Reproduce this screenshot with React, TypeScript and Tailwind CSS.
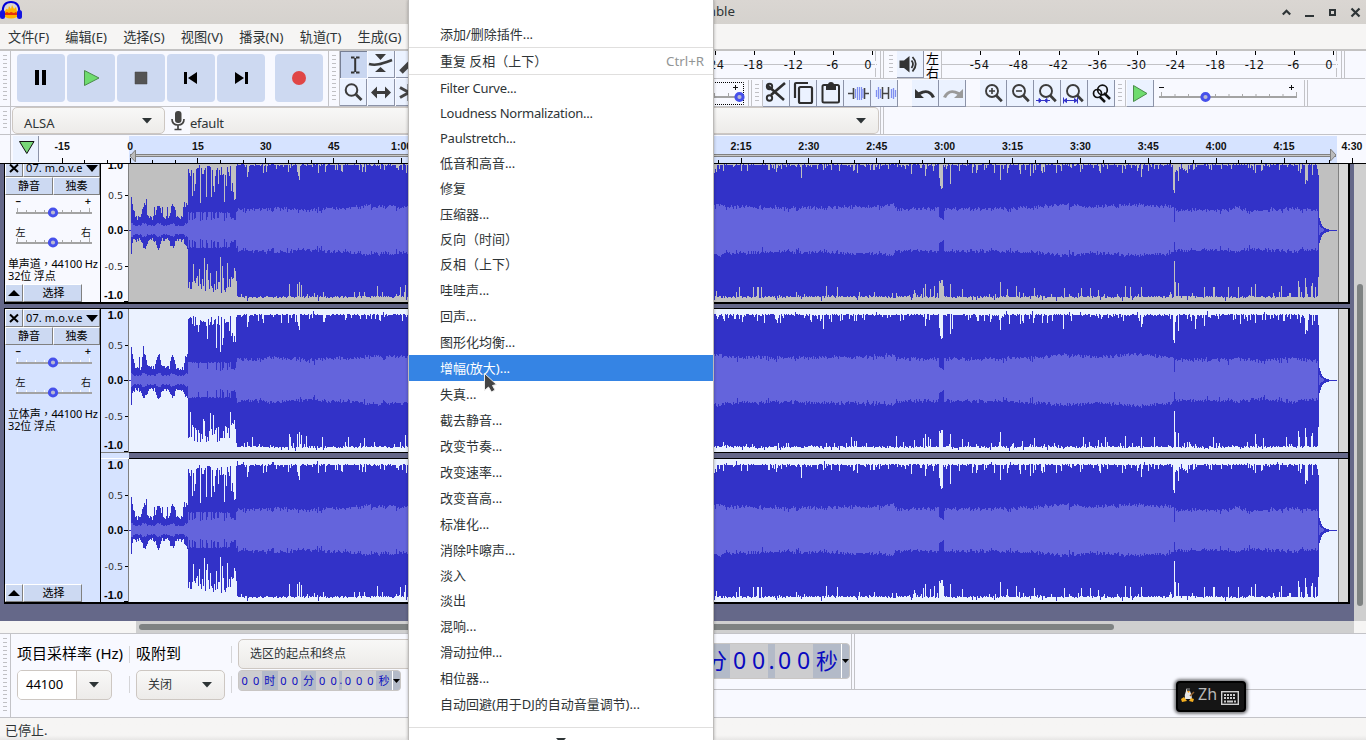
import React from 'react';

const UI = "font-['Noto_Sans','Noto_Sans_CJK_SC',sans-serif]";

/* ---------- waveform ---------- */

function rng(seed: number) {
  let s = seed;
  return () => {
    s = (s * 1664525 + 1013904223) >>> 0;
    return s / 4294967296;
  };
}

const RMS: [number, number][] = [
  [237, 20], [250, 19], [275, 21], [300, 19], [355, 21], [365, 23], [400, 22], [500, 23], [600, 22], [708, 22],
  [717, 25], [725, 22], [780, 21], [850, 22], [885, 23], [892, 25], [896, 20], [938, 20], [944, 20], [1000, 20],
  [1030, 21], [1060, 24], [1100, 22], [1120, 23], [1140, 25], [1148, 23], [1170, 23], [1176, 19], [1230, 19],
  [1236, 22], [1242, 19], [1260, 18], [1294, 21], [1300, 19], [1318, 19],
];

const TOP_DIPS: Record<number, number> = {
  247: 53, 248: 58, 263: 57, 298: 54, 299: 50, 297: 58, 925: 54, 939: 52, 940: 44, 941: 41, 942: 42, 950: 46, 1000: 50,
  1020: 56, 1033: 57, 1042: 57, 1141: 53, 1173: 40, 1174: 37, 1175: 58, 1178: 49, 1255: 57, 1300: 57, 1305: 46,
  1306: 50, 1307: 49, 1312: 55,
};
const BOT_DIPS: Record<number, number> = {
  289: 54, 297: 54, 299: 52, 301: 55, 405: 55, 914: 60, 923: 58, 925: 54, 930: 59, 939: 51, 940: 53, 941: 50, 942: 50,
  950: 54, 962: 59, 1000: 52, 1034: 58, 1098: 60, 1125: 56, 1141: 57, 1174: 31, 1175: 52, 1178: 53, 1213: 57, 1255: 54,
  1298: 51, 1299: 57, 1305: 48, 1306: 57, 1312: 53, 1311: 56,
};

function rmsAt(x: number) {
  for (let i = 1; i < RMS.length; i++) {
    if (x <= RMS[i][0]) {
      const [x0, a] = RMS[i - 1];
      const [x1, b] = RMS[i];
      return a + ((b - a) * (x - x0)) / (x1 - x0);
    }
  }
  return 19;
}

function buildWave(seed: number) {
  const r = rng(seed);
  let peak = '';
  let rms = '';
  const bar = (x: number, t: number, b: number) => `M${x} ${71 - Math.round(t)}h1V${71 + Math.round(b)}h-1z`;
  for (let x = 131; x < 1337; x++) {
    const a = r(), c = r(), d = r(), e = r();
    let t = 0, b = 0, q = 0, q2 = 0;
    if (x < 188) {
      const hump = Math.max(0, Math.cos(((x - 144) / 14.2) * Math.PI * 2)) * 13;
      t = 10 + hump + a * 5 + (a > 0.93 ? 8 : 0) + (x === 131 ? 10 : x < 135 ? 5 : 0);
      b = 8 + hump * 0.6 + c * 4 + (x === 131 ? 8 : 0);
      q = 4 + (hump > 6 ? 2 : 0) + d;
      q2 = q;
    } else if (x < 237) {
      const valley = x > 230 && x < 236;
      t = a < 0.3 ? 26 + c * 25 : 54 + c * 11;
      b = e < 0.35 ? 26 + d * 28 : 48 + d * 15;
      if (x === 188) { t = 61; b = 58; }
      if (valley) { t = 28 + c * 20; b = 38 + d * 12; }
      q = valley ? 10 + d * 2 : a < 0.4 ? 9 + c * 4 : 17 + c;
      q2 = q;
    } else if (x < 1318) {
      t = 66 - a * 1.6 - (c < 0.22 ? d * 7 : 0) - (e < 0.02 ? 8 : 0) + (e > 0.98 ? 3 : 0);
      b = 66 + c * 1.8 - (a < 0.12 ? d * 5 : 0) - (d < 0.025 ? 10 : 0) + (e < 0.03 ? 3 : 0);
      if (TOP_DIPS[x]) t = TOP_DIPS[x];
      if (BOT_DIPS[x]) b = BOT_DIPS[x];
      q = rmsAt(x) + (d + c) * 2.6 - 1.5 - (e > 0.95 ? 3 : 0);
      q2 = rmsAt(x) + (a + d) * 2.6 - 1.5 - (e > 0.95 ? 3 : 0);
      if (x >= 939 && x <= 943) { q = 13 - (x - 939) * 0.7; q2 = q; }
      if (x === 1174) { q = 8; q2 = 12; }
    } else {
      t = 12 * Math.exp(-(x - 1319) / 3);
      b = t + 1;
      if (x === 1318) { t = 55; b = 47; }
      if (t < 0.5) { t = 0; b = 1; }
      q = x < 1324 && x > 1318 ? t * 0.4 : 0;
      q2 = q;
    }
    peak += bar(x - 129, t, b);
    if (q > 0) rms += bar(x - 129, Math.min(q, t), Math.min(q2, b));
  }
  return { peak, rms };
}

function Wave({ seed, clip = 0 }: { seed: number; clip?: number }) {
  const w = React.useMemo(() => buildWave(seed), [seed]);
  return (
    <svg width="1209" height={143 - clip} viewBox={`0 ${clip} 1209 ${143 - clip}`} shapeRendering="crispEdges" className="block shrink-0">
      <path d="M0 71h3v1h-3z" fill="#3232c8" />
      <path d={w.peak} fill="#3232c8" />
      <path d={w.rms} fill="#6464dc" />
    </svg>
  );
}

/* ---------- small parts ---------- */

function Grip({ className = '' }: { className?: string }) {
  return (
    <div className={`flex shrink-0 justify-center border-r border-[#c3c3c7] py-[4px] ${className}`}>
      <div className="w-[4px] bg-[repeating-linear-gradient(to_bottom,#c0c0c4_0_1px,transparent_1px_4px)]" />
    </div>
  );
}

function Ends({ className = '' }: { className?: string }) {
  return <div className={`w-[4px] shrink-0 border-x border-[#c3c3c7] ${className}`} />;
}

function Transport({ children }: { children: React.ReactNode }) {
  return (
    <div className="flex h-[48px] w-[48px] items-center justify-center rounded-[4px] bg-[#cdd9f1]">
      <svg width="48" height="48" viewBox="0 0 48 48">{children}</svg>
    </div>
  );
}

function Tool({ children, on = false }: { children?: React.ReactNode; on?: boolean }) {
  return (
    <div
      className={`h-[27px] w-[27px] shrink-0 border-[#8c93a8] ${
        on ? 'border-l border-t border-l-[#777f94] border-t-[#777f94] bg-[#c9d6f0]' : 'border-b border-r bg-[#ebf2ff]'
      }`}
    >
      <svg width="26" height="26" viewBox="0 0 26 26" className="block" fill="none">{children}</svg>
    </div>
  );
}

function Lens({ sign, extra }: { sign?: React.ReactNode; extra?: React.ReactNode }) {
  return (
    <>
      <circle cx="12" cy="11" r="6" stroke="#3c3c3c" strokeWidth="1.900" />
      <path d="M16 15.200l5.800 6" stroke="#3c3c3c" strokeWidth="2.700" />
      {sign}
      {extra}
    </>
  );
}

function Meter({ first, label, count, width }: { first: number; label: number; count: number; width: number }) {
  return (
    <svg width={width} height="27" viewBox={`0 0 ${width} 27`} className="block shrink-0">
      <path d={`M0 13.500H${width - 2}`} stroke="#c3c3c7" />
      <path d={`M${width - 1.5} 0v10M${width - 1.5} 17v9M${width - 1} 13.500h4`} stroke="#c3c3c7" />
      {Array.from({ length: count }, (_, i) => {
        const x = Math.round(first + i * 39.25);
        const v = label + i * 6;
        return (
          <g key={i}>
            <path d={`M${x + 0.5} 0v4`} stroke="#000" />
            <text x={v === 0 ? x - 4 : x - 0.5} y="17.500" textAnchor="middle" fontSize="11.500" letterSpacing="0.300" fill="#111" className="font-['DejaVu_Sans',sans-serif]">
              {v}
            </text>
          </g>
        );
      })}
    </svg>
  );
}

function Slider({ left, right, dark }: { left: string; right: string; dark: boolean }) {
  const signs = left === '–';
  return (
    <svg width="95" height="30" viewBox="0 0 95 30" className="block overflow-visible">
      <text x="10.500" y={signs ? 9 : 10} fontSize={signs ? 11 : 10} fontWeight={signs ? 600 : 400} fill="#111" className={UI}>{left}</text>
      <text x="86" y={signs ? 9 : 10} fontSize={signs ? 11 : 10} fontWeight={signs ? 600 : 400} fill="#111" textAnchor="end" className={UI}>{right}</text>
      <path d={Array.from({ length: 9 }, (_, i) => `M${12.5 + i * 9} ${i % 8 ? 14 : 12}v4`).join('')} stroke={dark ? '#fff' : '#a9a9a9'} />
      <path d="M11 17h76" stroke="#a3a3a3" strokeWidth="2" />
      <circle cx="48" cy="16.500" r="3.600" fill="#b9b9d2" stroke="#4650eb" strokeWidth="3" />
    </svg>
  );
}

function Bevel({ children, className = 'justify-center' }: { children: React.ReactNode; className?: string }) {
  return (
    <div className={`flex items-center whitespace-nowrap border-b border-r border-[#808080] border-l border-t border-l-white border-t-white bg-[#ccd9f2] ${className}`}>
      {children}
    </div>
  );
}

function Scale({ clip = 0, bg }: { clip?: number; bg: string }) {
  const rows: [string, number, boolean][] = [
    ['1.0', 6, true], ['0.5', 36, false], ['0.0', 71, true], ['-0.5', 107, false], ['-1.0', 136, true],
  ];
  return (
    <div className={`w-[28px] shrink-0 border-r border-[#808080] ${bg}`}>
      <svg width="27" height={143 - clip} viewBox={`0 ${clip} 27 ${143 - clip}`} className="block">
        {rows.map(([t, y, bold]) => (
          <text key={t} x="22" y={y + 3.6} textAnchor="end" fontSize={bold ? 11 : 9.5} fontWeight={bold ? 700 : 400} fill={bold ? '#000' : '#333'}
            className={bold ? "font-['Liberation_Sans',sans-serif]" : "font-['DejaVu_Sans',sans-serif]"}>{t}</text>
        ))}
        <path d="M23 71.500h4M24 36.500h3M24 107.500h3M23 142.500h4" stroke="#000" />
      </svg>
    </div>
  );
}

function Info({ kind }: { kind: string }) {
  return (
    <div className="pl-[3px] text-[11px] leading-[12px] tracking-[-0.150px] whitespace-nowrap text-black">
      <div>{kind}<span className="font-['Noto_Sans_CJK_TC',sans-serif]">，</span>44100 Hz</div>
      <div>32位 浮点</div>
    </div>
  );
}

function Header({ clipped = false }: { clipped?: boolean }) {
  return (
    <>
      <div className={`flex h-[18px] ${clipped ? '-mt-[5px]' : ''}`}>
        <Bevel className="w-[18px] justify-center">
          <svg width="10" height="10" viewBox="0 0 10 10"><path d="M1 1.500l8 7.500M9 1.500l-8 7.500" stroke="#000" strokeWidth="2" /></svg>
        </Bevel>
        <Bevel className="w-[77px] justify-between pl-[2px] pr-[1px] text-[11px] leading-[14px] text-black">
          <span className="tracking-[0.100px]">07. m.o.v.e</span>
          <svg width="12" height="7" viewBox="0 0 12 7"><path d="M0 0h12L6 7z" fill="#000" /></svg>
        </Bevel>
      </div>
      <div className="flex h-[18px] text-[11px] text-black">
        <Bevel className="w-[48px] justify-center">静音</Bevel>
        <Bevel className="w-[47px] justify-center">独奏</Bevel>
      </div>
    </>
  );
}

function Footer() {
  return (
    <div className="mt-auto flex h-[18px] text-[11px] text-black">
      <Bevel className="w-[18px] justify-center">
        <svg width="12" height="6" viewBox="0 0 12 6"><path d="M0 6h12L6 0z" fill="#000" /></svg>
      </Bevel>
      <Bevel className="w-[59px] justify-center pl-[2px]">选择</Bevel>
    </div>
  );
}

const Caret = () => (
  <svg width="10" height="6" viewBox="0 0 10 6"><path d="M0 0h10L5 5.500z" fill="#2e3436" /></svg>
);

const combo = 'flex items-center rounded-[5px] border border-[#cdc7c2] bg-linear-to-b from-[#f8f8f7] to-[#edebe9] text-[#2e3436]';

/* Each group of digits sits in its own field; units and the point lie between them. */
function Digits({ groups, big }: { groups: string[]; big: boolean }) {
  return (
    <div className={`flex items-stretch rounded-[4px] border border-[#c9c6c4] bg-[#b3bac8] text-[#0a0ac0] ${big ? 'h-[36px] text-[23px] leading-[33px]' : 'h-[21px] w-[163px] shrink-0 text-[11px] leading-[19px]'}`}>
      {groups.map((g, i) =>
        /\d/.test(g) ? (
          <span key={i} className={`flex bg-[#cdcdcf] ${big ? 'w-[38px]' : g.length === 3 ? 'w-[34px]' : 'w-[23px]'}`}>
            {g.split('').map((ch, k) => (
              <span key={k} className="flex-1 text-center">{ch}</span>
            ))}
          </span>
        ) : (
          <span
            key={i}
            className={`text-center ${g === '.' ? (big ? 'w-[7px]' : 'w-[3px] text-[10px]') : big ? 'w-[28px] text-[22px]' : 'w-[16px]'}`}
          >
            {g}
          </span>
        ),
      )}
      <span className="flex w-[8px] items-center justify-center border-l border-white">
        <svg width="7" height="4" viewBox="0 0 7 4"><path d="M0 0h7L3.500 4z" fill="#000" /></svg>
      </span>
    </div>
  );
}

/* ---------- menu ---------- */

const ITEMS = [
  'Filter Curve...', 'Loudness Normalization...', 'Paulstretch...', '低音和高音...', '修复', '压缩器...', '反向（时间）', '反相（上下）',
  '哇哇声...', '回声...', '图形化均衡...', '增幅(放大)...', '失真...', '截去静音...', '改变节奏...', '改变速率...', '改变音高...', '标准化...',
  '消除咔嚓声...', '淡入', '淡出', '混响...', '滑动拉伸...', '相位器...', '自动回避(用于DJ的自动音量调节)...',
];

function EffectMenu() {
  return (
    <div className="absolute left-[408px] top-0 h-[740px] w-[306px] overflow-hidden border-x border-[#bdbbb9] bg-white text-[13px] tracking-[-0.020px] text-[#2e3436] shadow-[0_0_3px_rgba(0,0,0,0.3)]">
      <div className="flex h-[47px] items-center pl-[31px] pt-[23px]">添加/删除插件...</div>
      <div className="flex h-[28px] items-center justify-between border-y border-[#e0dfde] pl-[31px] pr-[9px] pt-[2px]">
        <span>重复 反相（上下）</span>
        <span className="text-[13.300px] text-[#929595]">Ctrl+R</span>
      </div>
      <div className="pt-px">
        {ITEMS.map((t, i) => {
          const latin = i < 3;
          const tall = i > 4 && t.endsWith('...');
          return (
            <div key={t} className={`flex items-center whitespace-nowrap pl-[31px] ${latin ? 'h-[25px] text-[13px] tracking-[-0.250px]' : tall ? 'h-[26px] pt-[2px]' : 'h-[25px] pt-px'} ${i === 11 ? 'bg-[#3584e4] text-white' : ''}`}>
              {t}
            </div>
          );
        })}
      </div>
      <div className="mt-[10px] flex justify-center border-t border-[#e0dfde] pt-[10px]">
        <Caret />
      </div>
    </div>
  );
}

const LABELS = ['-15', '0', '15', '30', '45', '1:00', '1:15', '1:30', '1:45', '2:00', '2:15', '2:30', '2:45', '3:00', '3:15', '3:30', '3:45', '4:00', '4:15', '4:30'];

function TimeRuler() {
  let ticks = '';
  for (let i = -3; i <= 54; i++) {
    const x = Math.floor(130 + i * 22.63) + 0.5;
    if (x > 39) ticks += i % 3 === 0 ? `M${x} 23v5` : `M${x} 25v3`;
  }
  return (
    <div className="flex h-[29px] shrink-0 border-b border-black bg-[#f8f9ff]">
      <div className="w-[11px] border-r border-[#c3c3c7]" />
      <div className="my-px ml-[2px] w-[26px] border-r border-[#8c93a8] bg-[#ebf2ff]">
        <svg width="25" height="26" viewBox="0 0 25 26"><path d="M6.500 5.500h14.500L13.800 17.500z" fill="#78d778" stroke="#111" /></svg>
      </div>
      <svg width="1327" height="28" viewBox="39 0 1327 28" className="block">
        <rect x="129" y="1" width="1208" height="27" fill="#d6e3ff" />
        <rect x="130" y="19" width="1206" height="3" fill="#808080" />
        <rect x="130" y="20" width="1206" height="1" fill="#c6c6c6" />
        <path d="M135.500 15v12l-5.500-6z" fill="#bbb" stroke="#808080" />
        <path d="M1330.500 14v12l5.500-6z" fill="#bbb" stroke="#808080" />
        <path d={ticks} stroke="#000" />
        {LABELS.map((l, i) => (
          <text key={l} x={62.2 + i * 67.88} y="15" textAnchor="middle" fontSize="10.500" fontWeight="700" fill="#111" className="font-['Liberation_Sans',sans-serif]">{l}</text>
        ))}
      </svg>
    </div>
  );
}

export default function App() {
  return (
    <div className={`relative flex h-[740px] w-[1366px] flex-col overflow-hidden bg-[#f6f5f4] text-[13px] text-[#2e3436] ${UI}`}>
      {/* title bar */}
      <div className="flex h-[24px] shrink-0 items-center bg-linear-to-b from-[#dad6d2] to-[#d5d2ce]">
        <svg width="23" height="20" viewBox="0 0 23 20" className="-mt-[3px]">
          <path d="M3 12C2 4 6 1 11 1s9 3 8 11" fill="none" stroke="#0000d8" strokeWidth="2" />
          <path d="M5 10q2-4 3-1l1-4 2 3 1-4 2 4 2-2 1 5v5q-6 3-12 0z" fill="#ffb400" />
          <path d="M5 12l2-1 2 1 2-1 3 1 2-1 1 1v2H5z" fill="#e8320a" />
          <rect x="0" y="9" width="5" height="9" rx="2.500" fill="#1414e0" />
          <rect x="17" y="9" width="5" height="9" rx="2.500" fill="#1414e0" />
        </svg>
        <span className="ml-[670px] w-[42px] text-right text-[13.300px]">mble</span>
        <div className="ml-auto flex items-center gap-[12px] pr-[5px]">
          <svg width="11" height="11" viewBox="0 0 11 11"><path d="M1.800 7.500L5.500 3.800l3.700 3.700" fill="none" stroke="#2e3436" strokeWidth="2.200" /></svg>
          <svg width="11" height="11" viewBox="0 0 11 11"><path d="M1 9h9" stroke="#2e3436" strokeWidth="2" /></svg>
          <svg width="11" height="11" viewBox="0 0 11 11"><rect x="3" y="3" width="5" height="5" fill="none" stroke="#2e3436" strokeWidth="2" /></svg>
          <svg width="11" height="11" viewBox="0 0 11 11"><path d="M1.500 1.500l8 8M9.500 1.500l-8 8" stroke="#2e3436" strokeWidth="2.200" /></svg>
        </div>
      </div>

      {/* menu bar */}
      <div className="flex h-[27px] shrink-0 items-center gap-[16.200px] border-b-2 border-[#c3c2c2] pl-[8px] pt-[2px] text-[13.200px] whitespace-nowrap">
        {['文件(F)', '编辑(E)', '选择(S)', '视图(V)', '播录(N)', '轨道(T)', '生成(G)'].map((m) => <span key={m}>{m}</span>)}
      </div>

      {/* toolbars */}
      <div className="flex h-[56px] shrink-0 border-b border-[#c3c3c7] bg-[#f8f9ff]">
        <Grip className="w-[11px]" />
        <div className="flex items-start gap-[2px] pl-[6px] pt-[3px]">
          <Transport><path d="M18 16h4v15h-4zM25 16h4v15h-4z" fill="#000" /></Transport>
          <Transport><path d="M17.500 16.500v15L32 24z" fill="#6edc6e" stroke="#4b8b4b" /></Transport>
          <Transport><path d="M18 18h12v12H18z" fill="#545454" stroke="#444" strokeWidth=".5" /></Transport>
          <Transport><path d="M17 18h3v12h-3zM30 18v12l-9-6z" fill="#000" /></Transport>
          <Transport><path d="M18 18v12l9-6zM28 18h3v12h-3z" fill="#000" /></Transport>
          <div className="ml-[8px]"><Transport><circle cx="24" cy="24" r="7" fill="#e04646" /></Transport></div>
        </div>
        <div className="ml-[5px] w-px bg-[#c3c3c7]" />
        <Grip className="w-[11px]" />
        <div className="grid w-[110px] shrink-0 grid-cols-[27px_27px_27px] content-start gap-x-px gap-y-px overflow-hidden">
          <Tool on><path d="M10 5.500h3.500M15 5.500h3.500M10 20.500h3.500M15 20.500h3.500M14.200 6v14" stroke="#333" strokeWidth="2" /></Tool>
          <Tool>
            <path d="M1 13c7 2 12 0 23-4" stroke="#3c3c3c" strokeWidth="2.600" /><path d="M7 3h11l-5.500 6zM7 21h11l-5.500-5z" fill="#3c3c3c" />
          </Tool>
          <Tool><path d="M5 21L20 6" stroke="#444" strokeWidth="5" /></Tool>
          <Tool><circle cx="11.500" cy="11" r="5.800" stroke="#3c3c3c" strokeWidth="2" /><path d="M16 15.500l5.500 5.500" stroke="#3c3c3c" strokeWidth="2.800" /></Tool>
          <Tool><path d="M3 13.500l6-6v4.500h8V7.500l6 6-6 6V15H9v4.500z" fill="#3c3c3c" /></Tool>
          <Tool><path d="M13 5v17M4 8.500l18 10M4 18.500l18-10" stroke="#444" strokeWidth="3" /></Tool>
        </div>

        <div className="flex w-[915px] shrink-0 flex-col">
          <div className="flex h-[28px] border-b border-[#c3c3c7]">
            <div className="w-[240px]" />
            <Meter first={25} label={-24} count={5} width={187} />
            <div className="w-[3px]" />
            <Ends />
            <Grip className="w-[13px] border-r-0" />
            <Tool>
              <path d="M2.500 9.500h4.500L12.500 5v16.500L7 17H2.500z" fill="#333" />
              <path d="M14.500 9.500q3 3.500 0 7.500M15.500 6q6.500 7 0 14.500" stroke="#333" strokeWidth="1.800" />
            </Tool>
            <div className="flex w-[17px] flex-col items-center text-[13px] leading-[14px] text-black"><span>左</span><span>右</span></div>
            <div className="w-px bg-[#c3c3c7]" />
            <Meter first={38} label={-54} count={10} width={396} />
            <div className="w-[3px]" />
            <Ends />
          </div>
          <div className="flex h-[27px] pt-px">
            <div className="flex w-[297px] justify-end">
              <svg width="86" height="26" viewBox="0 0 86 26" className="block shrink-0">
                <path d="M0 2.500h82.500v22H0" fill="none" stroke="#000" strokeDasharray="1 1" />
                <path d="M0 17h82" stroke="#a3a3a3" strokeWidth="2" /><path d="M53.500 13v3M67.500 13v3" stroke="#a3a3a3" />
                <path d="M72 7.500h5M74.500 5v5" stroke="#111" /><circle cx="78.500" cy="17" r="3.600" fill="#b9b9d2" stroke="#4650eb" strokeWidth="3" />
              </svg>
            </div>
            <div className="w-px" />
            <Ends />
            <Grip className="w-[11px]" />
            <Tool>
              <path d="M4 5l17 15M22 3L8 15" stroke="#2e2e2e" strokeWidth="2.600" />
              <circle cx="6.500" cy="6.500" r="2.700" stroke="#2e2e2e" strokeWidth="1.900" /><circle cx="6.500" cy="18" r="2.700" stroke="#2e2e2e" strokeWidth="1.900" />
            </Tool>
            <Tool><rect x="9" y="7" width="13" height="16" rx="1.500" stroke="#2e2e2e" strokeWidth="2.200" /><path d="M5 18V4q0-1 1-1h12" stroke="#2e2e2e" strokeWidth="2.200" /></Tool>
            <Tool><rect x="5.500" y="5" width="16.500" height="17.500" rx="1.500" stroke="#2e2e2e" strokeWidth="2" /><path d="M9 5h10v5H9zM11 5q0-3 3-3t3 3" fill="#2e2e2e" /></Tool>
            <Tool><path d="M4 13.500h5M20 13.500h5M9.500 8v11M20.500 8v11" stroke="#444" strokeWidth="1.600" /><path d="M11.500 9v9M13.500 7v13M15.500 7v13M17.500 7v13M19 9v9" stroke="#7f8ff0" strokeWidth="1.200" /></Tool>
            <Tool><path d="M5.500 10v7M7.500 7v12M9.500 9v9M20.500 9v9M22.500 8v11M24.500 10v7" stroke="#7f8ff0" strokeWidth="1.300" /><path d="M11.500 7v12M17.500 7v12M12 13.500h6" stroke="#444" strokeWidth="1.500" /></Tool>
            <div className="w-[14px]" />
            <Tool><path d="M3 9v9h9l-3.500-3.200q7.500-4.800 11.500 3.200l3-1Q18 6.500 6.500 12.200z" fill="#333" /></Tool>
            <Tool><path d="M24 9v9h-9l3.500-3.200q-7.500-4.800-11.500 3.200l-3-1Q9 6.500 20.500 12.200z" fill="#9a9a9a" /></Tool>
            <div className="w-[14px]" />
            <Tool><Lens sign={<path d="M9 11h6M12 8v6" stroke="#3c3c3c" strokeWidth="1.600" />} /></Tool>
            <Tool><Lens sign={<path d="M9 11h6" stroke="#3c3c3c" strokeWidth="1.600" />} /></Tool>
            <Tool><Lens extra={<path d="M2 20.500h14M5 18.500L7.500 20.500l-2.500 2zM13 18.500L10.500 20.500l2.500 2z" stroke="#3232c8" fill="#3232c8" />} /></Tool>
            <Tool><Lens extra={<path d="M2.500 17.500v6M16.500 17.500v6M3 20.500h13M5.500 18.500l-2.500 2 2.500 2zM13.500 18.500l2.500 2-2.500 2z" stroke="#3232c8" fill="#3232c8" />} /></Tool>
            <Tool>
              <circle cx="14.500" cy="10" r="4.800" stroke="#111" strokeWidth="1.700" /><circle cx="9.500" cy="13.500" r="4" stroke="#111" strokeWidth="1.700" />
              <path d="M16 13l6 6M12 17l5 5" stroke="#111" strokeWidth="2.500" />
            </Tool>
            <Grip className="w-[11px]" />
            <div className="w-px" />
            <Tool><path d="M6.500 5.500v16L20 13.500z" fill="#6edc6e" stroke="#4b8b4b" /></Tool>
            <svg width="150" height="26" viewBox="0 0 150 26" className="block shrink-0">
              <path d={Array.from({ length: 11 }, (_, i) => `M${7.5 + i * 13.5} ${i % 10 ? 14 : 12}v4`).join('')} stroke="#a9a9a9" />
              <path d="M5 17h138" stroke="#a3a3a3" strokeWidth="2" /><path d="M5 7.500h5M135 7.500h5M137.500 5v5" stroke="#111" />
              <circle cx="51.500" cy="17" r="3.600" fill="#b9b9d2" stroke="#4650eb" strokeWidth="3" />
            </svg>
            <Ends />
          </div>
        </div>
      </div>

      {/* device bar */}
      <div className="flex h-[28px] shrink-0 border-b border-[#c3c3c7] bg-[#f8f9ff]">
        <Grip className="w-[11px]" />
        <div className={`${combo} ml-px h-[27px] w-[153px] justify-between pl-[11px] pr-[12px] text-[13px]`}><span className="pt-[5px] leading-none">ALSA</span><Caret /></div>
        <div className="flex w-[25px] items-center justify-center">
          <svg width="14" height="20" viewBox="0 0 14 20"><rect x="4" y="0" width="6.500" height="12" rx="3" fill="#444" /><path d="M1 8q0 6 6 6t6-6M7 14v4M3.500 18.500h7" fill="none" stroke="#444" strokeWidth="1.700" /></svg>
        </div>
        <div className={`${combo} h-[27px] w-[689px] justify-between rounded-l-none border-l-0 pr-[12px] text-[13px] tracking-[-0.250px]`}><span className="pt-[5px] leading-none">efault</span><Caret /></div>
        <div className="w-px" />
        <Ends />
      </div>

      <TimeRuler />

      {/* tracks */}
      <div className="flex h-[457px] shrink-0 bg-[#656889]">
        <div className="flex w-[1350px] flex-col overflow-hidden pl-[4px]">
          <div className="flex h-[140px] shrink-0 border-b-2 border-l border-r-2 border-black">
            <div className="flex w-[96px] shrink-0 flex-col overflow-hidden border-r border-black bg-[#f8f9ff]">
              <Header clipped />
              <div className="pt-px"><Slider left="–" right="+" dark={false} /><Slider left="左" right="右" dark={false} /></div>
              <div className="pt-px"><Info kind="单声道" /></div>
              <Footer />
            </div>
            <Scale clip={5} bg="bg-[#f8f9ff]" />
            <div className="w-[1209px] bg-[#c0c0c0]"><Wave seed={77} clip={5} /></div>
            <div className="flex-1 border-l border-[#808080] bg-[#d8d8d8]" />
          </div>
          <div className="mt-[4px] flex h-[296px] shrink-0 border-y border-b-2 border-l border-r-2 border-black">
            <div className="flex w-[96px] shrink-0 flex-col border-r border-black bg-[#d6e3ff]">
              <Header />
              <div className="pt-px"><Slider left="–" right="+" dark /><Slider left="左" right="右" dark /></div>
              <div className="pt-px"><Info kind="立体声" /></div>
              <Footer />
            </div>
            <div className="flex flex-1 flex-col">
              {[311, 77].map((seed, i) => (
                <React.Fragment key={seed}>
                  <div className="flex h-[143px]">
                    <Scale bg="bg-[#d6e3ff]" />
                    <div className="w-[1209px] bg-[#ebf2ff]"><Wave seed={seed} /></div>
                    <div className="flex-1 border-l border-[#808080] bg-[#d8d8d8]" />
                  </div>
                  {i === 0 && (
                    <div className="flex h-[7px]">
                      <div className="w-[28px] border-b border-t border-b-white border-t-[#808080] bg-[#d6e3ff]" />
                      <div className="flex-1 border-y border-black bg-[#656889]" />
                    </div>
                  )}
                </React.Fragment>
              ))}
            </div>
          </div>
        </div>
        <div className="ml-[4px] w-[12px] bg-[#cfcfcf] px-[3px] pt-[120px]"><div className="h-[322px] w-[6px] rounded-full bg-[#7e8282]" /></div>
      </div>

      {/* horizontal scrollbar */}
      <div className="flex h-[12px] shrink-0">
        <div className="w-[136px]" />
        <div className="w-[1218px] bg-[#cfcfcf] px-[3px] pt-[3px]"><div className="h-[6px] w-[975px] rounded-full bg-[#7e8282]" /></div>
      </div>

      {/* selection bar */}
      <div className="flex h-[85px] shrink-0 border-y border-[#c3c3c7] bg-[#f8f9ff]">
        <Grip className="w-[11px]" />
        <div className="flex w-[118px] flex-col pl-[6px] pt-[6px]">
          <div className="h-[30px] text-[15px] leading-[27px] whitespace-nowrap text-black">项目采样率 (Hz)</div>
          <div className={`${combo} h-[30px] w-[95px] overflow-hidden`}>
            <span className="flex h-full w-[59px] items-center border-r border-[#cdc7c2] bg-white pl-[8px] text-[13px] text-black">44100</span>
            <span className="flex flex-1 justify-center"><Caret /></span>
          </div>
        </div>
        <div className="flex w-px flex-col gap-[13px] pt-[12px]"><i className="h-[17px] bg-[#d5d5d8]" /><i className="h-[17px] bg-[#d5d5d8]" /></div>
        <div className="flex w-[101px] flex-col pl-[6px] pt-[6px]">
          <div className="h-[30px] text-[15px] leading-[27px] text-black">吸附到</div>
          <div className={`${combo} h-[30px] w-[89px] justify-between pl-[11px] pr-[12px]`}><span className="text-[12px]">关闭</span><Caret /></div>
        </div>
        <div className="flex w-px flex-col gap-[13px] pt-[12px]"><i className="h-[17px] bg-[#d5d5d8]" /><i className="h-[17px] bg-[#d5d5d8]" /></div>
        <div className="flex w-[460px] flex-col pl-[6px] pt-[5px]">
          <div className={`${combo} h-[30px] w-[331px] pl-[11px] text-[12px]`}>选区的起点和终点</div>
          <div className="mt-px flex gap-[5px]">
            <Digits big={false} groups={['00', '时', '00', '分', '00', '.', '000', '秒']} />
          </div>
        </div>
        <div className="flex flex-1 flex-col">
          <div className="flex h-[56px] border-b border-[#c3c3c7]">
            <div className="flex w-[158px] justify-end pt-[9px]">
              <Digits big groups={['分', '00', '.', '00', '秒']} />
            </div>
            <div className="w-px" />
            <Ends />
          </div>
        </div>
      </div>

      {/* status bar */}
      <div className="flex flex-1 items-center bg-linear-to-b from-[#f6f5f4] from-75% to-[#e4e3e2] pl-[5px] pt-[3px] text-[13px]">已停止.</div>

      <EffectMenu />

      {/* mouse pointer */}
      <svg width="16" height="22" viewBox="0 0 16 22" className="absolute left-[483px] top-[372px]">
        <path d="M1.500 1.500v17l4-3.500 3 5 3.500-2-2.500-4.500 4-1z" fill="#444" stroke="#eee" />
      </svg>

      {/* input method badge */}
      <div className="absolute left-[1176px] top-[681px] flex h-[31px] w-[70px] items-center rounded-[4px] border-2 border-black bg-[#151515] pl-[3px] text-[16px] text-[#b9b9b9] shadow-[0_0_3px_2px_rgba(0,0,0,0.5)]">
        <svg width="14" height="16" viewBox="0 0 14 16" className="mb-[4px] shrink-0">
          <path d="M7 1q2 0 2 3 2 4 2 8H4q-1-4 1-8 0-3 2-3z" fill="#e6e6e6" /><path d="M6 1h3v3H6z" fill="#555" /><path d="M6 4h3l-1.500 2z" fill="#f4a020" />
          <path d="M0 12l3-2 3 4-5 1zM13 12l-3-1-2 3 4 1z" fill="#f6b021" /><path d="M9 9l4-4" stroke="#94602c" strokeWidth="1.500" />
        </svg>
        <span className="mb-[5px] ml-[3px] leading-none">Zh</span>
        <svg width="18" height="14" viewBox="0 0 18 14" className="ml-[4px] mt-[2px] shrink-0">
          <rect x=".7" y=".7" width="16.600" height="12.600" fill="none" stroke="#d0d0d0" strokeWidth="1.400" />
          <path d="M3 4h12M3 7h12" stroke="#ccc" strokeWidth="2" strokeDasharray="2 1" /><path d="M3 10.500h2M6 10.500h6M13 10.500h2" stroke="#ccc" strokeWidth="2" />
        </svg>
      </div>
    </div>
  );
}
